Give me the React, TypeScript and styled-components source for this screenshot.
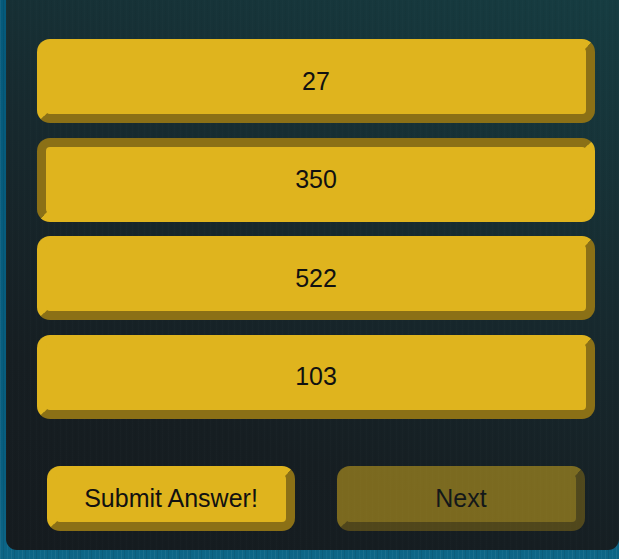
import React from "react";
import styled, { createGlobalStyle } from "styled-components";

const Global = createGlobalStyle`
  html, body { margin: 0; padding: 0; }
  body {
    width: 619px;
    height: 559px;
    overflow: hidden;
    font-family: "Liberation Sans", Arial, sans-serif;
    background:
      repeating-linear-gradient(90deg, rgba(255,255,255,0.06) 0 1px, rgba(0,0,0,0) 1px 3px, rgba(0,0,0,0.08) 3px 4px, rgba(0,0,0,0) 4px 7px, rgba(120,200,230,0.07) 7px 8px, rgba(0,0,0,0) 8px 11px),
      linear-gradient(180deg, #055a7b 0%, #085e7f 85%, #0d6586 100%);
  }
`;

const Page = styled.div`
  display: flex;
  padding-left: 6px;
`;

const Panel = styled.div`
  width: 613px;
  flex-shrink: 0;
  margin-top: -20px;
  padding: 59px 24px 19px 31px;
  box-sizing: border-box;
  border-radius: 11px;
  background:
    repeating-linear-gradient(90deg, rgba(255,255,255,0.012) 0 1px, rgba(0,0,0,0) 1px 3px, rgba(0,0,0,0.03) 3px 4px, rgba(0,0,0,0) 4px 6px),
    linear-gradient(200deg, #163e43 0%, #17292e 45%, #161e22 75%, #151b1f 100%);
  display: flex;
  flex-direction: column;
`;

const Options = styled.div`
  display: flex;
  flex-direction: column;
  gap: 14.67px;
`;

const Bevel = styled.button<{ $pressed?: boolean }>`
  font-family: "Liberation Sans", Arial, sans-serif;
  font-size: 25px;
  color: #111;
  background: #dfb41e;
  border: 9px solid;
  border-color: ${(p) =>
    p.$pressed
      ? "#8b7016 #dfb41e #dfb41e #8b7016"
      : "#dfb41e #8b7016 #8b7016 #dfb41e"};
  border-radius: 13px;
  padding: 0;
  display: flex;
  align-items: center;
  justify-content: center;
  cursor: pointer;
  box-sizing: border-box;
`;

const Option = styled(Bevel)`
  width: 558px;
  height: 84px;
`;

const Actions = styled.div`
  display: flex;
  justify-content: center;
  gap: 42px;
  margin-top: 47px;
  padding-right: 0;
`;

const ActionButton = styled(Bevel)<{ $disabled?: boolean }>`
  width: 248px;
  height: 65px;
  opacity: ${(p) => (p.$disabled ? 0.5 : 1)};
`;

const options = [
  { label: "27", pressed: false },
  { label: "350", pressed: true },
  { label: "522", pressed: false },
  { label: "103", pressed: false },
];

export default function App() {
  return (
    <>
      <Global />
      <Page>
        <Panel>
          <Options>
            {options.map((o) => (
              <Option key={o.label} $pressed={o.pressed}>
                {o.label}
              </Option>
            ))}
          </Options>
          <Actions>
            <ActionButton>Submit Answer!</ActionButton>
            <ActionButton $disabled>Next</ActionButton>
          </Actions>
        </Panel>
      </Page>
    </>
  );
}
